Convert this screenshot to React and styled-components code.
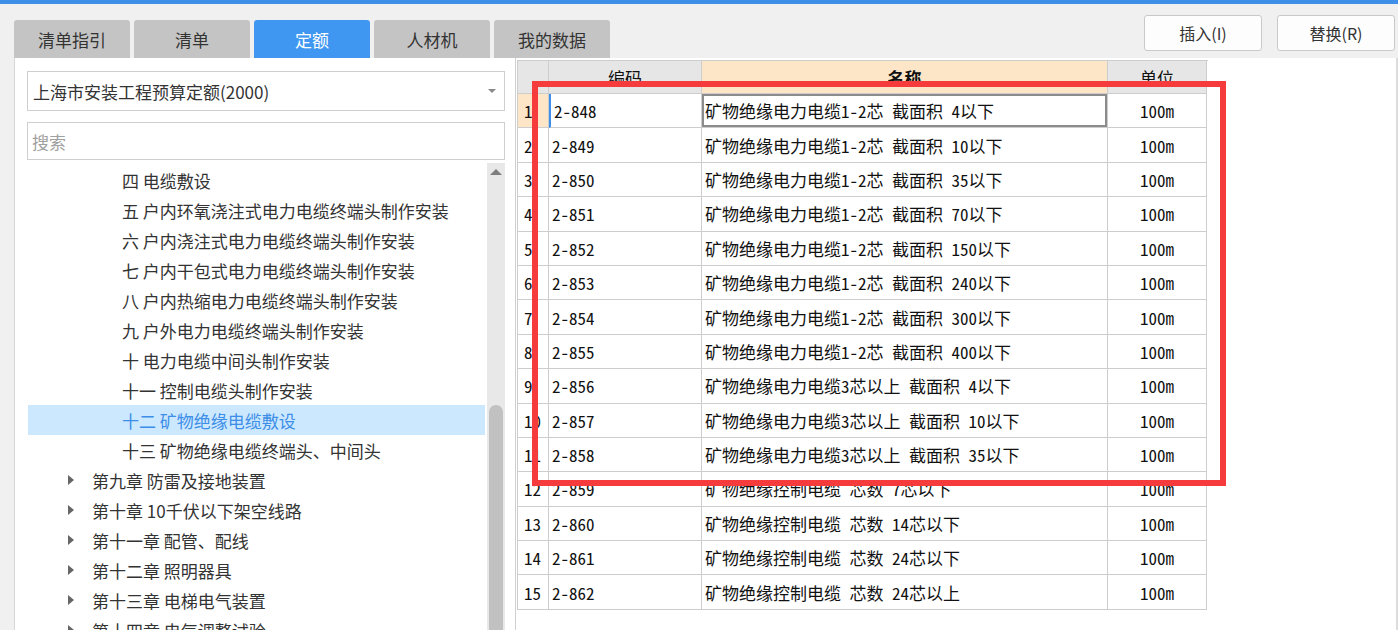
import React from "react";
import styled, { createGlobalStyle } from "styled-components";

const GlobalStyle = createGlobalStyle`
  body {
    margin: 0;
    background: #f0f0f0;
    font-family: "Noto Sans CJK SC", "Noto Sans", sans-serif;
  }
`;

const Window = styled.div`
  position: relative;
  width: 1398px;
  height: 630px;
  overflow: hidden;
  display: flex;
  flex-direction: column;
  background: #f0f0f0;
`;

const TopStrip = styled.div`
  height: 4px;
  background: #3d8fe8;
  flex: none;
`;

const Header = styled.div`
  height: 54px;
  flex: none;
  display: flex;
  justify-content: space-between;
  padding: 0 3px 0 14px;
`;

const Tabs = styled.div`
  display: flex;
  gap: 4px;
  align-self: flex-end;
  height: 38px;
`;

const Tab = styled.div`
  width: 116px;
  flex: none;
  display: flex;
  align-items: center;
  justify-content: center;
  border-radius: 3px 3px 0 0;
  font-size: 17px;
  background: ${({ active }) => (active ? "#3f97f1" : "#c4c4c4")};
  color: ${({ active }) => (active ? "#fff" : "#333")};
`;

const Toolbar = styled.div`
  display: flex;
  gap: 15px;
  padding-top: 11px;
`;

const ToolButton = styled.div`
  width: 118px;
  height: 36px;
  box-sizing: border-box;
  background: #fdfdfd;
  border: 1px solid #c9c9c9;
  border-radius: 3px;
  display: flex;
  align-items: center;
  justify-content: center;
  font-size: 16px;
  color: #333;
`;

const Body = styled.div`
  flex: 1;
  min-height: 0;
  display: flex;
  padding-left: 14px;
`;

const LeftPanel = styled.div`
  width: 502px;
  flex: none;
  box-sizing: border-box;
  background: #fff;
  border-left: 1px solid #d8d8d8;
  border-right: 1px solid #d0d0d0;
  padding: 13px 10px 0 12px;
  display: flex;
  flex-direction: column;
`;

const Select = styled.div`
  height: 40px;
  box-sizing: border-box;
  border: 1px solid #cfcfcf;
  display: flex;
  align-items: center;
  justify-content: space-between;
  padding: 0 8px 0 5px;
  font-size: 17px;
  color: #333;
  flex: none;
`;

const Caret = styled.span`
  width: 0;
  height: 0;
  border-left: 4px solid transparent;
  border-right: 4px solid transparent;
  border-top: 4px solid #8a8a8a;
`;

const Search = styled.div`
  margin-top: 11px;
  height: 38px;
  box-sizing: border-box;
  border: 1px solid #cfcfcf;
  display: flex;
  align-items: center;
  padding-left: 4px;
  font-size: 17px;
  color: #a0a0a0;
  flex: none;
`;

const TreeArea = styled.div`
  flex: 1;
  min-height: 0;
  margin-top: 3px;
  display: flex;
  margin-left: 1px;
`;

const TreeList = styled.div`
  flex: 1;
  padding-top: 2px;
  padding-right: 2px;
`;

const TreeRow = styled.div`
  height: 30px;
  display: flex;
  align-items: center;
  font-size: 17px;
  white-space: nowrap;
  padding-left: ${({ level }) => (level === 2 ? 94 : 40)}px;
  background: ${({ selected }) => (selected ? "#cce8ff" : "transparent")};
  color: ${({ selected }) => (selected ? "#3c8ee6" : "#333")};
`;

const Arrow = styled.span`
  width: 0;
  height: 0;
  border-top: 5px solid transparent;
  border-bottom: 5px solid transparent;
  border-left: 6px solid #666;
  margin-right: 18px;
`;

const ScrollTrack = styled.div`
  width: 18px;
  flex: none;
  background: #e8e8e8;
  display: flex;
  flex-direction: column;
  align-items: center;
`;

const UpArrow = styled.span`
  margin-top: 6px;
  width: 0;
  height: 0;
  border-left: 6px solid transparent;
  border-right: 6px solid transparent;
  border-bottom: 6px solid #7d7d7d;
`;

const Thumb = styled.div`
  margin-top: 230px;
  width: 14px;
  flex: 1;
  background: #c1c1c1;
  border-radius: 7px 7px 0 0;
`;

const GridPanel = styled.div`
  flex: 1;
  background: #fff;
  border-right: 2px solid #dcdcdc;
  padding: 2px 0 0 1px;
`;

const Grid = styled.div`
  width: 690px;
  border-left: 1px solid #cdcdcd;
  border-top: 1px solid #cdcdcd;
  font-family: "Noto Sans Mono CJK SC", "Liberation Mono", "Noto Sans CJK SC", monospace;
  font-size: 17px;
  color: #111;
`;

const GridRow = styled.div`
  display: grid;
  grid-template-columns: 31px 153px 406px 99px;
  height: ${({ header }) => (header ? "33px" : "34.4px")};
`;

const Cell = styled.div`
  display: flex;
  align-items: center;
  box-sizing: border-box;
  border-right: 1px solid #cdcdcd;
  border-bottom: 1px solid #cdcdcd;
  padding-left: ${({ pad }) => pad ?? 3}px;
  justify-content: ${({ center }) => (center ? "center" : "flex-start")};
  background: ${({ bg }) => bg || "#fff"};
  font-weight: ${({ bold }) => (bold ? 700 : 400)};
  white-space: nowrap;
  overflow: hidden;
  ${({ active }) => (active ? "box-shadow: inset 0 0 0 2px #8c8c8c;" : "")}
  ${({ current }) => (current ? "border-left: 2px solid #3d8fe8;" : "")}
`;

const Highlight = styled.div`
  position: absolute;
  left: 532px;
  top: 81px;
  width: 694px;
  height: 405px;
  box-sizing: border-box;
  border: 6px solid #f53b3b;
  pointer-events: none;
`;

const tabs = ["清单指引", "清单", "定额", "人材机", "我的数据"];

const tree = [
  { text: "四 电缆敷设", level: 2 },
  { text: "五 户内环氧浇注式电力电缆终端头制作安装", level: 2 },
  { text: "六 户内浇注式电力电缆终端头制作安装", level: 2 },
  { text: "七 户内干包式电力电缆终端头制作安装", level: 2 },
  { text: "八 户内热缩电力电缆终端头制作安装", level: 2 },
  { text: "九 户外电力电缆终端头制作安装", level: 2 },
  { text: "十 电力电缆中间头制作安装", level: 2 },
  { text: "十一 控制电缆头制作安装", level: 2 },
  { text: "十二 矿物绝缘电缆敷设", level: 2, selected: true },
  { text: "十三 矿物绝缘电缆终端头、中间头", level: 2 },
  { text: "第九章 防雷及接地装置", level: 1 },
  { text: "第十章 10千伏以下架空线路", level: 1 },
  { text: "第十一章 配管、配线", level: 1 },
  { text: "第十二章 照明器具", level: 1 },
  { text: "第十三章 电梯电气装置", level: 1 },
  { text: "第十四章 电气调整试验", level: 1 },
];

const p12 = "矿物绝缘电力电缆1-2芯 截面积 ";
const p3 = "矿物绝缘电力电缆3芯以上 截面积 ";
const pc = "矿物绝缘控制电缆 芯数 ";

const rows = [
  ["2-848", p12 + "4以下"],
  ["2-849", p12 + "10以下"],
  ["2-850", p12 + "35以下"],
  ["2-851", p12 + "70以下"],
  ["2-852", p12 + "150以下"],
  ["2-853", p12 + "240以下"],
  ["2-854", p12 + "300以下"],
  ["2-855", p12 + "400以下"],
  ["2-856", p3 + "4以下"],
  ["2-857", p3 + "10以下"],
  ["2-858", p3 + "35以下"],
  ["2-859", pc + "7芯以下"],
  ["2-860", pc + "14芯以下"],
  ["2-861", pc + "24芯以下"],
  ["2-862", pc + "24芯以上"],
];

const App = () => {
  return (
    <>
      <GlobalStyle />
      <Window>
        <TopStrip />
        <Header>
          <Tabs>
            {tabs.map((t) => (
              <Tab key={t} active={t === "定额"}>
                {t}
              </Tab>
            ))}
          </Tabs>
          <Toolbar>
            <ToolButton>插入(I)</ToolButton>
            <ToolButton>替换(R)</ToolButton>
          </Toolbar>
        </Header>
        <Body>
          <LeftPanel>
            <Select>
              <span>上海市安装工程预算定额(2000)</span>
              <Caret />
            </Select>
            <Search>搜索</Search>
            <TreeArea>
              <TreeList>
                {tree.map((n) => (
                  <TreeRow key={n.text} level={n.level} selected={n.selected}>
                    {n.level === 1 && <Arrow />}
                    {n.text}
                  </TreeRow>
                ))}
              </TreeList>
              <ScrollTrack>
                <UpArrow />
                <Thumb />
              </ScrollTrack>
            </TreeArea>
          </LeftPanel>
          <GridPanel>
            <Grid>
              <GridRow header>
                <Cell bg="#e6e6e6" />
                <Cell bg="#e6e6e6" center pad={0}>编码</Cell>
                <Cell bg="#fde5c8" center pad={0} bold>名称</Cell>
                <Cell bg="#e6e6e6" center pad={0}>单位</Cell>
              </GridRow>
              {rows.map(([code, name], i) => (
                <GridRow key={code}>
                  <Cell pad={6} bg={i === 0 ? "#fde5c8" : "#fff"}>{i + 1}</Cell>
                  <Cell current={i === 0}>{code}</Cell>
                  <Cell active={i === 0}>{name}</Cell>
                  <Cell center pad={0}>100m</Cell>
                </GridRow>
              ))}
            </Grid>
          </GridPanel>
        </Body>
        <Highlight />
      </Window>
    </>
  );
};

export default App;
